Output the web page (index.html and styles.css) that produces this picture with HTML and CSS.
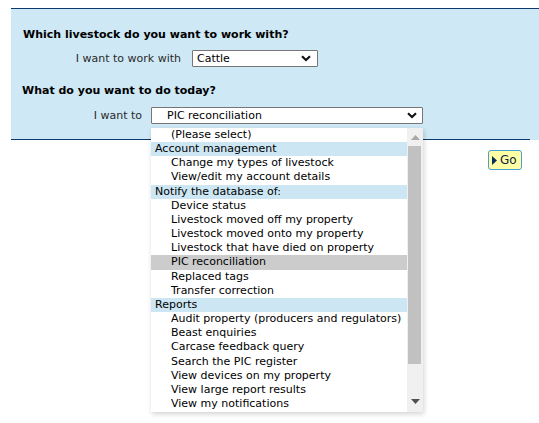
FILE: index.html
```html
<!DOCTYPE html>
<html>
<head>
<meta charset="utf-8">
<link rel="stylesheet" href="styles.css">
</head>
<body>
<div class="panel">
  <div class="inner">
    <h2 class="q q1">Which livestock do you want to work with?</h2>
    <div class="row">
      <span class="label label1">I want to work with</span>
      <div class="select select1">
        <span class="val">Cattle</span>
        <svg class="chev" width="10" height="7" viewBox="0 0 10 7"><path d="M1 1.2 L5 5 L9 1.2" fill="none" stroke="#111" stroke-width="2.1"/></svg>
      </div>
    </div>
    <h2 class="q q2">What do you want to do today?</h2>
    <div class="row row2">
      <span class="label label2">I want to</span>
      <div class="select select2">
        <span class="val">PIC reconciliation</span>
        <svg class="chev" width="10" height="7" viewBox="0 0 10 7"><path d="M1 1.2 L5 5 L9 1.2" fill="none" stroke="#111" stroke-width="2.1"/></svg>
        <div class="popup">
          <ul class="list">
            <li class="opt">(Please select)</li>
            <li class="grp">Account management</li>
            <li class="opt">Change my types of livestock</li>
            <li class="opt">View/edit my account details</li>
            <li class="grp">Notify the database of:</li>
            <li class="opt">Device status</li>
            <li class="opt">Livestock moved off my property</li>
            <li class="opt">Livestock moved onto my property</li>
            <li class="opt">Livestock that have died on property</li>
            <li class="opt sel">PIC reconciliation</li>
            <li class="opt">Replaced tags</li>
            <li class="opt">Transfer correction</li>
            <li class="grp">Reports</li>
            <li class="opt">Audit property (producers and regulators)</li>
            <li class="opt">Beast enquiries</li>
            <li class="opt">Carcase feedback query</li>
            <li class="opt">Search the PIC register</li>
            <li class="opt">View devices on my property</li>
            <li class="opt">View large report results</li>
            <li class="opt">View my notifications</li>
          </ul>
          <div class="scrollbar">
            <svg class="arrow" width="9" height="5" viewBox="0 0 9 5"><path d="M0 5 L4.5 0 L9 5 Z" fill="#a8a8a8"/></svg>
            <div class="track"><div class="thumb"></div></div>
            <svg class="arrow" width="9" height="5" viewBox="0 0 9 5"><path d="M0 0 L9 0 L4.5 5 Z" fill="#505050"/></svg>
          </div>
        </div>
      </div>
    </div>
  </div>
</div>
<div class="actions">
  <button class="go"><svg width="5" height="9" viewBox="0 0 5 9"><path d="M0 0 L5 4.5 L0 9 Z" fill="#0b2f5c"/></svg><span>Go</span></button>
</div>
</body>
</html>
```
FILE: styles.css
```css
html, body {
  margin: 0;
  padding: 0;
  background: #ffffff;
  font-family: "DejaVu Sans", Verdana, sans-serif;
  font-size: 11px;
  color: #000;
}
body {
  min-height: 423px;
}
.panel {
  margin: 8px 0 0 11px;
  border-top: 1px solid #0d3a6b;
  background: #cfe8f5;
}
.inner {
  margin-right: 9px;
  padding: 19px 0 15px 12px;
  border-bottom: 1px solid #0d3a6b;
}
.q {
  margin: 0;
  font-size: 11px;
  font-weight: bold;
  line-height: 14px;
  color: #000;
}
.q2 {
  margin-top: 17px;
  margin-left: -1px;
}
.row {
  display: flex;
  align-items: center;
  margin-top: 8px;
  height: 17px;
}
.row2 {
  margin-top: 9px;
}
.label {
  text-align: right;
  color: #2a2a2a;
  line-height: 14px;
}
.label1 {
  width: 158px;
  margin-right: 11px;
}
.label2 {
  width: 119px;
  margin-right: 9px;
}
.select {
  position: relative;
  box-sizing: border-box;
  height: 17px;
  border: 1px solid #767676;
  border-radius: 1px;
  background: #fff;
  display: flex;
  align-items: center;
  justify-content: space-between;
  line-height: 14px;
}
.select1 {
  width: 126px;
  padding: 0 6px 0 4px;
}
.select2 {
  width: 272px;
  padding: 0 5px 0 15px;
}
.chev {
  display: block;
}
.popup {
  position: absolute;
  left: -1px;
  top: 20px;
  width: 272px;
  height: 284px;
  background: #fff;
  display: flex;
  box-shadow: 1px 2px 5px rgba(0, 0, 0, 0.18);
  z-index: 5;
}
.list {
  list-style: none;
  margin: 0;
  padding: 0;
  flex: 1;
}
.list li {
  height: 14.17px;
  line-height: 14.17px;
  white-space: nowrap;
  color: #000;
}
.opt {
  padding-left: 20px;
}
.grp {
  padding-left: 4px;
  background: #cce6f4;
}
.sel {
  background: #cccccc;
}
.scrollbar {
  width: 16px;
  background: #f0f0f0;
  display: flex;
  flex-direction: column;
  align-items: center;
}
.arrow {
  display: block;
  margin: 7px 0 5px;
}
.scrollbar .arrow:last-child {
  margin: 4px 0 8px;
}
.track {
  flex: 1;
  width: 100%;
}
.thumb {
  margin: 1px 2px 0 1px;
  height: 218px;
  background: #c1c1c1;
}
.actions {
  display: flex;
  justify-content: flex-end;
  padding: 10px 17px 0 0;
}
.go {
  box-sizing: border-box;
  width: 34px;
  height: 20px;
  padding: 0 0 0 3px;
  border: 1px solid #4a9fd4;
  border-radius: 3px;
  background: #ffffa6;
  display: flex;
  align-items: center;
  gap: 3px;
  font-family: "DejaVu Sans", Verdana, sans-serif;
  font-size: 12px;
  color: #0b1f3a;
  cursor: pointer;
}
.go svg {
  display: block;
}
```
